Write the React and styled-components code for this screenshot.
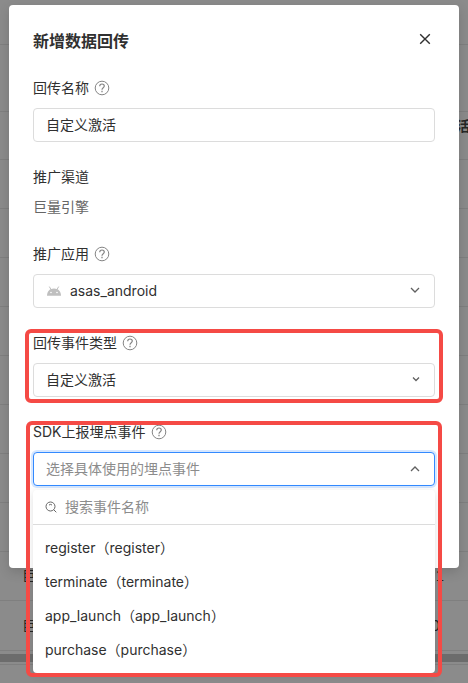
import React, { useState } from 'react';
import styled, { createGlobalStyle } from 'styled-components';

const TEXT_COLOR = '#303030';
const MUTED_COLOR = '#8c8c8c';
const BORDER_COLOR = '#dcdcdc';
const MARK_COLOR = '#f54a45';

const GlobalStyle = createGlobalStyle`
  * {
    box-sizing: border-box;
  }
  body {
    margin: 0;
    overflow: hidden;
    background-color: #8b8b8b;
    color: ${TEXT_COLOR};
    font-family: Inter, 'Noto Sans CJK SC', sans-serif;
    font-size: 14px;
    line-height: 20px;
  }
  button,
  input,
  select {
    font: inherit;
    color: inherit;
  }
`;

let Page = styled.div`
  position: relative;
  min-height: 100vh;
  overflow: hidden;
`;
let Report = styled.table`
  width: 100%;
  table-layout: fixed;
  border-collapse: separate;
  border-spacing: 0;
`;
let Row = styled.tr`
  height: ${props => props.$height || 49}px;
`;
let Cell = styled.td`
  padding: 0 0 0 ${props => props.$indent || 0}px;
  border-bottom: 1px solid #7f7f7f;
  color: #262626;
  white-space: nowrap;
  text-align: ${props => props.$align || 'left'};
  font-variant-numeric: tabular-nums;
`;
let HeadCell = styled(Cell)`
  padding-top: 4px;
  font-weight: 600;
  vertical-align: top;
`;
let ScrollTrack = styled.div`
  padding: 3px 0 2px;
  border-bottom: 1px solid #7f7f7f;
`;
let ScrollThumb = styled.div`
  height: 8px;
  background-color: #6c6c6c;
`;
let Overlay = styled.div`
  position: absolute;
  top: 0;
  left: 0;
  right: 0;
  padding: 5px 9px;
`;
let Dialog = styled.section`
  display: flex;
  flex-direction: column;
  gap: 25px;
  padding: 24px 24px 82px;
  border-radius: 4px;
  background-color: white;
  box-shadow: 0 4px 12px rgba(0, 0, 0, 0.15);
`;
let DialogHeader = styled.header`
  display: flex;
  justify-content: space-between;
  align-items: flex-start;
`;
let Title = styled.h1`
  margin: 0;
  font-size: 16px;
  font-weight: 600;
  line-height: 24px;
`;
let CloseButton = styled.button`
  display: flex;
  justify-content: center;
  align-items: center;
  width: 20px;
  height: 20px;
  padding: 0;
  border: none;
  background: none;
  cursor: pointer;
`;
let Field = styled.div`
  position: relative;
  display: flex;
  flex-direction: column;
  gap: 10px;
`;
let LabelRow = styled.div`
  display: flex;
  align-items: center;
  gap: 6px;
  height: 20px;
`;
let HelpButton = styled.button`
  display: flex;
  padding: 0;
  border: none;
  background: none;
  cursor: help;
`;
let StaticValue = styled.div`
  padding-bottom: 2px;
  color: #666666;
`;
let TextInput = styled.input`
  width: 100%;
  height: 34px;
  padding: 0 12px 2px;
  border: 1px solid ${BORDER_COLOR};
  border-radius: 4px;
  outline: none;
  background-color: white;
`;
let SelectBox = styled.div`
  position: relative;
  display: flex;
`;
let Select = styled.select`
  appearance: none;
  width: 100%;
  height: 34px;
  padding: 0 36px 0 ${props => (props.$hasIcon ? 36 : 12)}px;
  border: 1px solid ${props => (props.$open ? '#338aff' : BORDER_COLOR)};
  border-radius: 4px;
  outline: none;
  background-color: white;
  box-shadow: ${props => (props.$open ? '0 0 0 2px #d6e7ff' : 'none')};
  color: ${props => (props.$placeholder ? MUTED_COLOR : TEXT_COLOR)};
`;
let SelectIcon = styled.span`
  position: absolute;
  top: 0;
  bottom: 0;
  ${props => props.$side}: 14px;
  display: flex;
  align-items: center;
  pointer-events: none;
`;
// red frame drawn round a field, reaching past its edges
let Mark = styled.div`
  position: absolute;
  z-index: 3;
  top: -${props => props.$top}px;
  bottom: -${props => props.$bottom}px;
  left: -${props => props.$side}px;
  right: -${props => props.$side}px;
  border: 4px solid ${MARK_COLOR};
  border-radius: 6px;
  pointer-events: none;
`;
let Popup = styled.div`
  position: absolute;
  z-index: 2;
  top: 100%;
  left: 0;
  right: 0;
  margin-top: 4px;
  border-radius: 4px;
  background-color: white;
  box-shadow: 0 2px 8px rgba(0, 0, 0, 0.12);
`;
let SearchRow = styled.label`
  display: flex;
  align-items: center;
  gap: 8px;
  height: 35px;
  padding: 0 12px;
  border-bottom: 1px solid ${BORDER_COLOR};
`;
let SearchInput = styled.input`
  flex: 1;
  min-width: 0;
  padding: 0;
  border: none;
  outline: none;
  background: none;
  &::placeholder {
    color: ${MUTED_COLOR};
    opacity: 1;
  }
`;
let OptionList = styled.ul`
  margin: 0;
  padding: 6px 0;
  list-style: none;
`;
let Option = styled.button`
  display: block;
  width: 100%;
  height: 34px;
  padding: 0 12px;
  border: none;
  background: none;
  text-align: left;
  cursor: pointer;
  &:hover {
    background-color: #f5f5f5;
  }
`;

let HelpIcon = () => (
  <svg width="14" height="14" viewBox="0 0 14 14" fill="none" stroke="#858585" overflow="visible">
    <circle cx="7" cy="7" r="6.8" />
    <path d="M4.7 5.3C4.7 3.9 5.6 3 7 3s2.300.9 2.300 2.100C9.300 6.700 7 6.700 7 8.700" strokeWidth="1.2" />
    <path d="M7 9.800v1.400" strokeWidth="1.3" />
  </svg>
);
let CloseIcon = () => (
  <svg width="12" height="12" viewBox="0 0 12 12" fill="none" stroke="#303030" strokeWidth="1.4">
    <path d="M1.200 1.200l9.600 9.600M10.800 1.200L1.200 10.800" />
  </svg>
);
let Chevron = ({ up, small }) => (
  <svg width="12" height="12" viewBox="0 0 12 12" fill="none" stroke="#606060" strokeWidth="1.3">
    {up && <path d="M2 8l4-4 4 4" />}
    {!up && <path d={small ? 'M4 3.500l3 3 3-3' : 'M2 3l4 4 4-4'} />}
  </svg>
);
let AndroidIcon = () => (
  <svg width="14" height="12" viewBox="0 0 14 12" fill="#bfbfbf">
    <path d="M0 10.800C0 6.400 2.800 3.600 7 3.600S14 6.400 14 10.800z" />
    <path d="M2.300 1.600l1.900 3.200M11.700 1.600L9.800 4.800" stroke="#bfbfbf" strokeWidth="1" />
    <circle cx="4" cy="7.500" r=".8" fill="white" />
    <circle cx="10" cy="7.500" r=".8" fill="white" />
  </svg>
);
let SearchIcon = () => (
  <svg width="12" height="12" viewBox="0 0 12 12" fill="none" stroke="#666666">
    <circle cx="5.500" cy="5.500" r="4.500" />
    <path d="M4 4Q5.500 2.800 7 4M8.700 8.700l2.600 2.600" />
  </svg>
);

let Label = ({ htmlFor, text, help }) => (
  <LabelRow>
    <label htmlFor={htmlFor}>{text}</label>
    {help && (
      <HelpButton type="button">
        <HelpIcon />
      </HelpButton>
    )}
  </LabelRow>
);

let events = ['register', 'terminate', 'app_launch', 'purchase'];
let emptyRows = [1, 2, 3, 4, 5, 6, 7, 8];

let Background = () => (
  <>
    <Report>
      <colgroup>
        <col />
        <col width="50" />
        <col width="12" />
      </colgroup>
      <thead>
        <Row $height={45}>
          <Cell colSpan={3} />
        </Row>
        <Row $height={67}>
          <Cell colSpan={3} />
        </Row>
        <Row $height={48}>
          <HeadCell as="th" />
          <HeadCell as="th" />
          <HeadCell as="th">活</HeadCell>
        </Row>
      </thead>
      <tbody>
        {emptyRows.map(row => (
          <Row key={row}>
            <Cell colSpan={3} />
          </Row>
        ))}
        <Row>
          <Cell $indent={22}>巨</Cell>
          <Cell $align="center">221</Cell>
          <Cell />
        </Row>
        <Row $height={50}>
          <Cell $indent={22}>巨</Cell>
          <Cell $align="center">20</Cell>
          <Cell />
        </Row>
      </tbody>
    </Report>
    <ScrollTrack>
      <ScrollThumb />
    </ScrollTrack>
  </>
);

let EventPicker = () => {
  let [open, setOpen] = useState(true);
  let [picked, setPicked] = useState('');
  let [keyword, setKeyword] = useState('');
  let toggle = e => {
    e.preventDefault();
    setOpen(!open);
  };
  let pick = name => {
    setPicked(name);
    setOpen(false);
  };
  return (
    <Field>
      <Label htmlFor="sdkEvent" text="SDK上报埋点事件" help />
      <SelectBox>
        <Select
          id="sdkEvent"
          value={picked}
          onMouseDown={toggle}
          onChange={e => pick(e.target.value)}
          $open={open}
          $placeholder={!picked}
        >
          <option value="">选择具体使用的埋点事件</option>
          {events.map(name => (
            <option key={name} value={name}>
              {name}（{name}）
            </option>
          ))}
        </Select>
        <SelectIcon $side="right">
          <Chevron up={open} />
        </SelectIcon>
      </SelectBox>
      {open && (
        <Popup>
          <SearchRow>
            <SearchIcon />
            <SearchInput
              placeholder="搜索事件名称"
              value={keyword}
              onChange={e => setKeyword(e.target.value)}
            />
          </SearchRow>
          <OptionList>
            {events
              .filter(name => name.includes(keyword))
              .map(name => (
                <li key={name}>
                  <Option type="button" onClick={() => pick(name)}>
                    {name}（{name}）
                  </Option>
                </li>
              ))}
          </OptionList>
        </Popup>
      )}
      <Mark $top={1} $bottom={open ? 191 : 6} $side={7} />
    </Field>
  );
};

let App = () => {
  let [name, setName] = useState('自定义激活');
  return (
    <Page>
      <GlobalStyle />
      <Background />
      <Overlay>
        <Dialog role="dialog" aria-labelledby="dialogTitle">
          <DialogHeader>
            <Title id="dialogTitle">新增数据回传</Title>
            <CloseButton type="button">
              <CloseIcon />
            </CloseButton>
          </DialogHeader>
          <Field>
            <Label htmlFor="name" text="回传名称" help />
            <TextInput id="name" value={name} onChange={e => setName(e.target.value)} />
          </Field>
          <Field>
            <LabelRow>推广渠道</LabelRow>
            <StaticValue>巨量引擎</StaticValue>
          </Field>
          <Field>
            <Label htmlFor="app" text="推广应用" help />
            <SelectBox>
              <Select id="app" $hasIcon>
                <option>asas_android</option>
              </Select>
              <SelectIcon $side="left">
                <AndroidIcon />
              </SelectIcon>
              <SelectIcon $side="right">
                <Chevron />
              </SelectIcon>
            </SelectBox>
          </Field>
          <Field>
            <Label htmlFor="eventType" text="回传事件类型" help />
            <SelectBox>
              <Select id="eventType">
                <option>自定义激活</option>
              </Select>
              <SelectIcon $side="right">
                <Chevron small />
              </SelectIcon>
            </SelectBox>
            <Mark $top={4} $bottom={6} $side={8} />
          </Field>
          <EventPicker />
        </Dialog>
      </Overlay>
    </Page>
  );
};
export default App;
